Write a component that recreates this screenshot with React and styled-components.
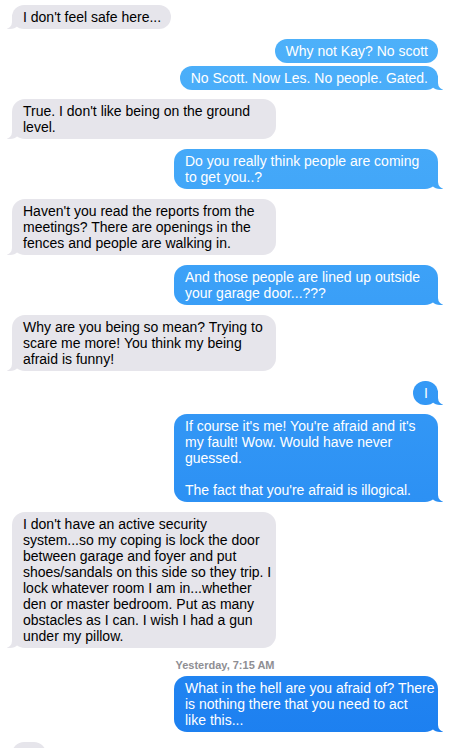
import React from 'react'
import styled, { createGlobalStyle, css } from 'styled-components'

const messages = [
  { from: 'them', text: "I don't feel safe here..." },
  { from: 'me', text: 'Why not Kay? No scott', tail: false },
  { from: 'me', text: 'No Scott. Now Les. No people. Gated.', gap: 3 },
  { from: 'them', text: "True. I don't like being on the ground\nlevel.", gap: 9 },
  { from: 'me', text: 'Do you really think people are coming\nto get you..?' },
  { from: 'them', text: "Haven't you read the reports from the\nmeetings? There are openings in the\nfences and people are walking in." },
  { from: 'me', text: 'And those people are lined up outside\nyour garage door...???' },
  { from: 'them', text: 'Why are you being so mean? Trying to\nscare me more! You think my being\nafraid is funny!' },
  { from: 'me', text: 'I' },
  { from: 'me', text: "If course it's me! You're afraid and it's\nmy fault! Wow. Would have never\nguessed.\n\nThe fact that you're afraid is illogical.", gap: 9 },
  { from: 'them', text: "I don't have an active security\nsystem...so my coping is lock the door\nbetween garage and foyer and put\nshoes/sandals on this side so they trip. I\nlock whatever room I am in...whether\nden or master bedroom. Put as many\nobstacles as I can. I wish I had a gun\nunder my pillow." },
  { stamp: 'Yesterday, 7:15 AM' },
  { from: 'me', text: "What in the hell are you afraid of? There\nis nothing there that you need to act\nlike this...", gap: 0 },
  { from: 'them', text: '', width: 34 }
]

const App = () => (
  <>
    <GlobalStyle />
    <Thread>
      {messages.map((msg, i) => {
        if (msg.stamp) {
          return <Stamp key={i}>{msg.stamp}</Stamp>
        }
        const multi = msg.text.includes('\n')
        return (
          <Row key={i} $from={msg.from} $gap={i === 0 ? 0 : msg.gap ?? 10}>
            <Bubble
              $from={msg.from}
              $tail={msg.tail !== false}
              $full={multi}
              style={msg.width ? { width: msg.width, height: 24 } : undefined}
            >
              {msg.text}
            </Bubble>
          </Row>
        )
      })}
    </Thread>
  </>
)

const GlobalStyle = createGlobalStyle`
  html, body {
    margin: 0;
    background: #fff;
    overflow: hidden;
  }
  body {
    font-family: "Liberation Sans", Arial, sans-serif;
    -webkit-font-smoothing: antialiased;
  }
`

const Thread = styled.div`
  display: flex;
  flex-direction: column;
  padding: 5px 13px 0 12px;
  height: 748px;
  box-sizing: border-box;
  overflow: hidden;
`

const Row = styled.div`
  display: flex;
  justify-content: ${p => (p.$from === 'me' ? 'flex-end' : 'flex-start')};
  margin-top: ${p => p.$gap}px;
`

const blueFill = css`
  background: linear-gradient(to bottom, #50b3fa 0px, #3a9ff7 300px, #1c7ff0 748px);
  background-attachment: fixed;
`

const Bubble = styled.div`
  position: relative;
  box-sizing: border-box;
  width: ${p => (p.$full ? '264px' : 'auto')};
  padding: 4px 10px 4px 11px;
  border-radius: 13px;
  font-size: 14px;
  line-height: 16px;
  white-space: pre;
  color: ${p => (p.$from === 'me' ? '#fff' : '#000')};
  ${p => (p.$from === 'me' ? blueFill : css`background: #e6e5eb;`)}

  ${p => p.$tail && css`
    &::before {
      content: '';
      position: absolute;
      bottom: 0;
      width: 14px;
      height: 14px;
      ${p.$from === 'me'
        ? css`right: -5px; border-bottom-left-radius: 11px; ${blueFill}`
        : css`left: -5px; border-bottom-right-radius: 11px; background: #e6e5eb;`}
    }
    &::after {
      content: '';
      position: absolute;
      bottom: 0;
      width: 8px;
      height: 14px;
      background: #fff;
      ${p.$from === 'me'
        ? css`right: -8px; border-bottom-left-radius: 7px;`
        : css`left: -8px; border-bottom-right-radius: 7px;`}
    }
  `}
`

const Stamp = styled.div`
  margin: 10px 0 4px;
  text-align: center;
  font-size: 11px;
  line-height: 14px;
  font-weight: bold;
  color: #8e8e93;
`

export default App
